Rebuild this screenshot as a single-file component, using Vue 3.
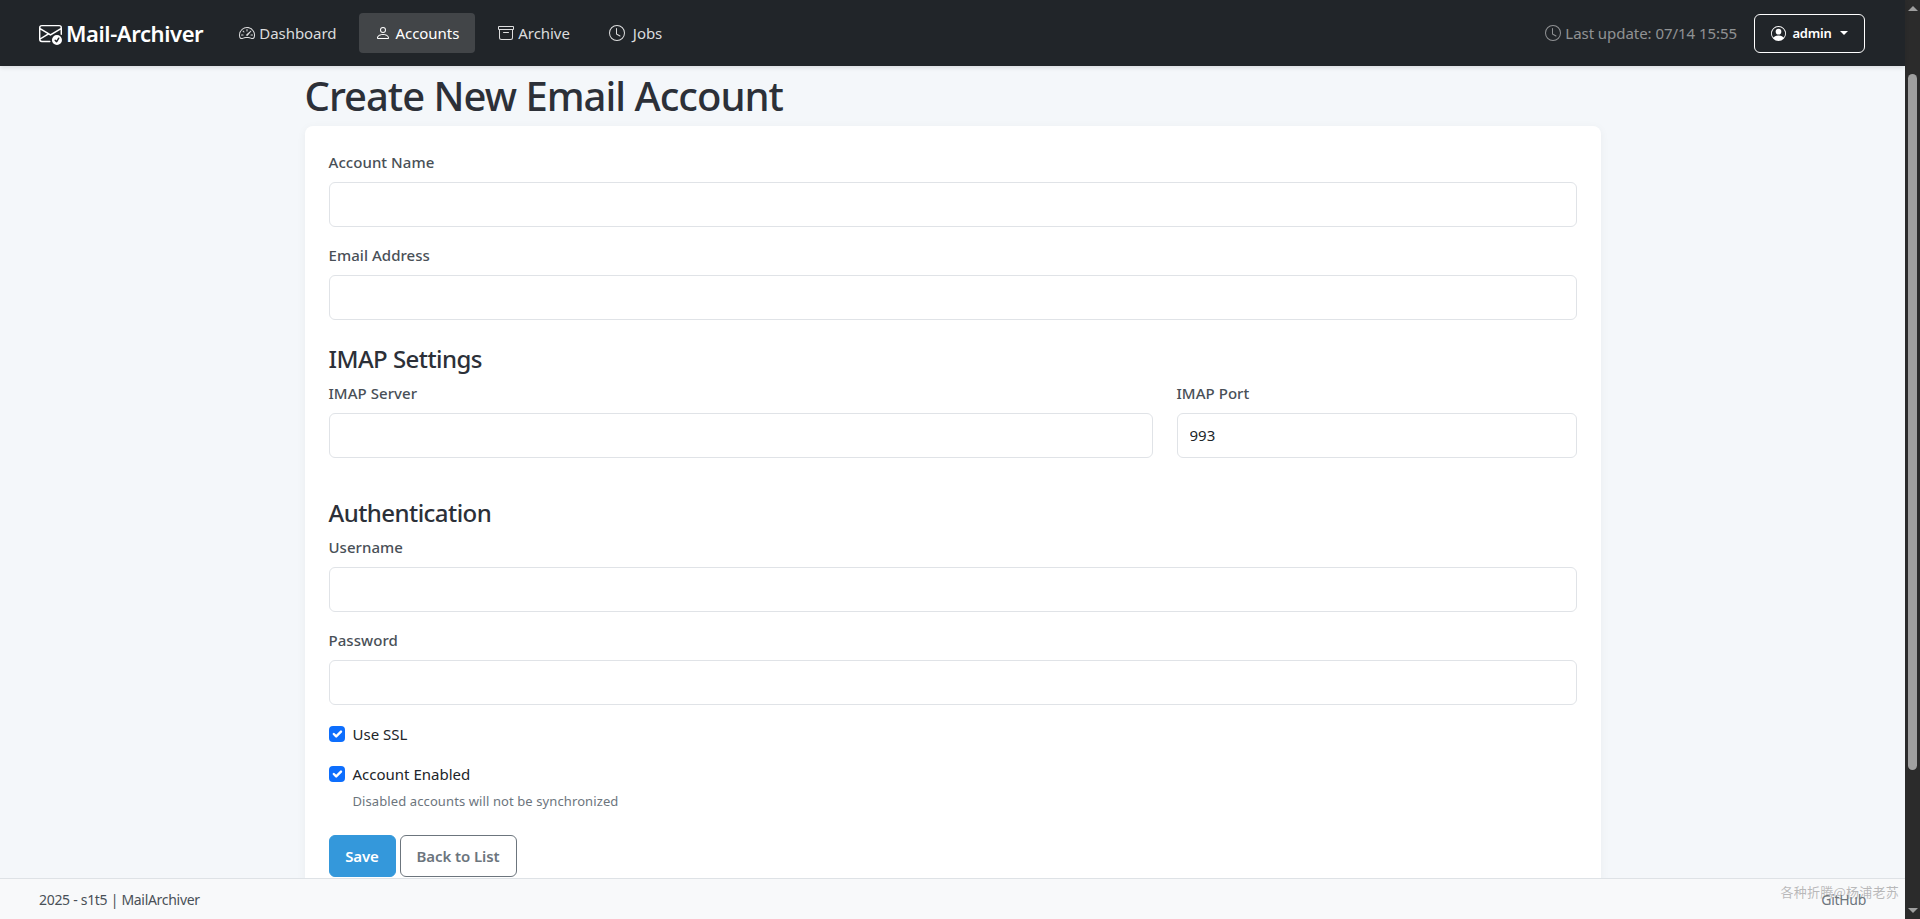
<script setup>
import { reactive } from 'vue'

const links = [
  { label: 'Dashboard', icon: 'speed', active: false },
  { label: 'Accounts', icon: 'person', active: true },
  { label: 'Archive', icon: 'archive', active: false },
  { label: 'Jobs', icon: 'clock', active: false },
]
const form = reactive({
  name: '', email: '', server: '', port: '993', username: '', password: '', ssl: true, enabled: true,
})
</script>

<template>
  <div class="window">
    <div class="page">
      <nav class="navbar">
        <a class="brand" href="#">
          <svg class="brand-icon" viewBox="0 0 16 16" fill="currentColor">
            <path d="M2 2a2 2 0 0 0-2 2v8.01A2 2 0 0 0 2 14h5.5a.5.5 0 0 0 0-1H2a1 1 0 0 1-.966-.741l5.64-3.471L8 9.583l7-4.2V8.5a.5.5 0 0 0 1 0V4a2 2 0 0 0-2-2H2Zm3.708 6.208L1 11.105V5.383l4.708 2.825ZM1 4.217V4a1 1 0 0 1 1-1h12a1 1 0 0 1 1 1v.217l-7 4.2-7-4.2Z"/>
            <path d="M16 12.5a3.5 3.5 0 1 1-7 0 3.5 3.5 0 0 1 7 0Zm-1.993-1.679a.5.5 0 0 0-.686.172l-1.17 1.95-.547-.547a.5.5 0 0 0-.708.708l.774.773a.75.75 0 0 0 1.174-.144l1.335-2.226a.5.5 0 0 0-.172-.686Z"/>
          </svg>
          <span>Mail-Archiver</span>
        </a>
        <ul class="nav-links">
          <li v-for="l in links" :key="l.label">
            <a href="#" class="nav-link" :class="{ active: l.active, jobs: l.icon === 'clock' }">
              <svg class="icon" viewBox="0 0 16 16" fill="currentColor">
                <template v-if="l.icon === 'speed'">
                  <path d="M8 4a.5.5 0 0 1 .5.5V6a.5.5 0 0 1-1 0V4.5A.5.5 0 0 1 8 4zM3.732 5.732a.5.5 0 0 1 .707 0l.915.914a.5.5 0 1 1-.708.708l-.914-.915a.5.5 0 0 1 0-.707zM2 10a.5.5 0 0 1 .5-.5h1.586a.5.5 0 0 1 0 1H2.5A.5.5 0 0 1 2 10zm9.5 0a.5.5 0 0 1 .5-.5h1.5a.5.5 0 0 1 0 1H12a.5.5 0 0 1-.5-.5zm.754-4.246a.389.389 0 0 0-.527-.02L7.547 9.31a.91.91 0 1 0 1.302 1.258l3.434-4.297a.389.389 0 0 0-.029-.518z"/>
                  <path fill-rule="evenodd" d="M0 10a8 8 0 1 1 15.547 2.661c-.442 1.253-1.845 1.602-2.932 1.25C11.309 13.488 9.475 13 8 13c-1.474 0-3.31.488-4.615.911-1.087.352-2.49.003-2.932-1.25A7.988 7.988 0 0 1 0 10zm8-7a7 7 0 0 0-6.603 9.329c.203.575.923.876 1.68.63C4.397 12.533 6.358 12 8 12s3.604.532 4.923.96c.757.245 1.477-.056 1.68-.631A7 7 0 0 0 8 3z"/>
                </template>
                <path v-else-if="l.icon === 'person'" d="M8 8a3 3 0 1 0 0-6 3 3 0 0 0 0 6Zm2-3a2 2 0 1 1-4 0 2 2 0 0 1 4 0Zm4 8c0 1-1 1-1 1H3s-1 0-1-1 1-4 6-4 6 3 6 4Zm-1-.004c-.001-.246-.154-.986-.832-1.664C11.516 10.68 10.289 10 8 10c-2.29 0-3.516.68-4.168 1.332-.678.678-.83 1.418-.832 1.664h10Z"/>
                <path v-else-if="l.icon === 'archive'" d="M0 2a1 1 0 0 1 1-1h14a1 1 0 0 1 1 1v2a1 1 0 0 1-1 1v7.5a2.5 2.5 0 0 1-2.5 2.5h-9A2.5 2.5 0 0 1 1 12.5V5a1 1 0 0 1-1-1V2zm2 3v7.5A1.5 1.5 0 0 0 3.5 14h9a1.5 1.5 0 0 0 1.5-1.5V5H2zm13-3H1v2h14V2zM5 7.5a.5.5 0 0 1 .5-.5h5a.5.5 0 0 1 0 1h-5a.5.5 0 0 1-.5-.5z"/>
                <template v-else>
                  <path d="M8 3.5a.5.5 0 0 0-1 0V9a.5.5 0 0 0 .252.434l3.5 2a.5.5 0 0 0 .496-.868L8 8.71V3.5z"/>
                  <path d="M8 16A8 8 0 1 0 8 0a8 8 0 0 0 0 16zm7-8A7 7 0 1 1 1 8a7 7 0 0 1 14 0z"/>
                </template>
              </svg>
              <span>{{ l.label }}</span>
            </a>
          </li>
        </ul>
        <div class="nav-right">
          <span class="last-update">
            <svg class="icon" viewBox="0 0 16 16" fill="currentColor">
              <path d="M8 3.5a.5.5 0 0 0-1 0V9a.5.5 0 0 0 .252.434l3.5 2a.5.5 0 0 0 .496-.868L8 8.71V3.5z"/>
              <path d="M8 16A8 8 0 1 0 8 0a8 8 0 0 0 0 16zm7-8A7 7 0 1 1 1 8a7 7 0 0 1 14 0z"/>
            </svg>
            <span>Last update: 07/14 15:55</span>
          </span>
          <button class="user-btn" type="button">
            <svg class="icon" viewBox="0 0 16 16" fill="currentColor">
              <path d="M11 6a3 3 0 1 1-6 0 3 3 0 0 1 6 0z"/>
              <path fill-rule="evenodd" d="M0 8a8 8 0 1 1 16 0A8 8 0 0 1 0 8zm8-7a7 7 0 0 0-5.468 11.37C3.242 11.226 4.805 10 8 10s4.757 1.225 5.468 2.37A7 7 0 0 0 8 1z"/>
            </svg>
            <span>admin</span>
            <i class="caret"></i>
          </button>
        </div>
      </nav>

      <main class="main">
        <div class="container">
          <h1>Create New Email Account</h1>
          <form class="card" @submit.prevent>
            <div class="field">
              <label for="f-name">Account Name</label>
              <input id="f-name" v-model="form.name" type="text" />
            </div>
            <div class="field">
              <label for="f-email">Email Address</label>
              <input id="f-email" v-model="form.email" type="text" />
            </div>
            <h4>IMAP Settings</h4>
            <div class="row">
              <div class="field">
                <label for="f-server">IMAP Server</label>
                <input id="f-server" v-model="form.server" type="text" />
              </div>
              <div class="field">
                <label for="f-port">IMAP Port</label>
                <input id="f-port" v-model="form.port" type="text" />
              </div>
            </div>
            <h4 class="auth">Authentication</h4>
            <div class="field">
              <label for="f-user">Username</label>
              <input id="f-user" v-model="form.username" type="text" />
            </div>
            <div class="field password">
              <label for="f-pass">Password</label>
              <input id="f-pass" v-model="form.password" type="password" />
            </div>
            <label class="check">
              <input v-model="form.ssl" type="checkbox" />
              <span>Use SSL</span>
            </label>
            <label class="check enabled">
              <input v-model="form.enabled" type="checkbox" />
              <span>Account Enabled</span>
            </label>
            <small class="hint">Disabled accounts will not be synchronized</small>
            <div class="actions">
              <button class="btn save" type="submit">Save</button>
              <a class="btn back" href="#">Back to List</a>
            </div>
          </form>
        </div>
      </main>

      <footer class="footer">
        <span>2025 - s1t5 | MailArchiver</span>
        <a href="#">GitHub</a>
        <span class="watermark">各种折腾@杨浦老苏</span>
      </footer>
    </div>

    <div class="scrollbar">
      <i class="arrow up"></i>
      <div class="track"><div class="thumb"></div></div>
      <i class="arrow down"></i>
    </div>
  </div>
</template>

<style>
html, body { margin: 0; overflow: hidden; }
</style>

<style scoped>
* { box-sizing: border-box; }
.window {
  display: flex;
  height: 100vh;
  font-family: "Noto Sans", "Open Sans", "Noto Sans CJK SC", sans-serif;
  font-size: 16px;
  color: #212529;
}
.page { flex: 1; min-width: 0; display: flex; flex-direction: column; background: #f4f7fa; position: relative; }

.navbar {
  flex: none;
  height: 66px;
  display: flex;
  align-items: center;
  padding: 0 40px 0 39px;
  background: #212529;
  box-shadow: 0 2px 4px rgba(0, 0, 0, .1);
  position: relative;
  z-index: 2;
}
.brand {
  display: flex;
  align-items: center;
  gap: 4px;
  color: #fff;
  text-decoration: none;
  font-size: 22px;
  font-weight: 600;
  letter-spacing: -.4px;
}
.brand-icon { width: 23px; height: 23px; }
.nav-links { display: flex; gap: 7px; list-style: none; margin: 0 0 0 20px; padding: 0; }
.nav-link {
  display: flex;
  align-items: center;
  gap: 4px;
  height: 40px;
  padding: 0 16px;
  border-radius: 4px;
  color: rgba(255, 255, 255, .85);
  text-decoration: none;
  font-size: 15px;
  letter-spacing: -.05px;
}
.nav-link.active { background: rgba(255, 255, 255, .15); color: #fff; }
.nav-link.jobs { gap: 8px; }
.icon { width: 16px; height: 16px; flex: none; }
.nav-right { margin-left: auto; display: flex; align-items: center; gap: 17px; }
.last-update {
  display: flex;
  align-items: center;
  gap: 4px;
  color: rgba(255, 255, 255, .5);
  font-size: 15px;
  letter-spacing: -.05px;
}
.user-btn {
  display: flex;
  align-items: center;
  justify-content: center;
  width: 111px;
  height: 39px;
  gap: 6px;
  padding: 0;
  background: transparent;
  border: 1px solid #fff;
  border-radius: 6px;
  color: #fff;
  font: 600 13px "Noto Sans", sans-serif;
  letter-spacing: -.2px;
}
.user-btn .icon { width: 15px; height: 15px; }
.caret { border-top: 4px solid #fff; border-left: 4px solid transparent; border-right: 4px solid transparent; margin-left: 2px; }

.main { flex: 1; min-height: 0; overflow: hidden; }
.container { width: 1296px; margin: 0 auto; }
h1 {
  margin: 6px 0 6px;
  font-size: 40px;
  line-height: 48px;
  font-weight: 500;
  color: #2c3038;
  letter-spacing: -1px;
}
.card {
  display: flex;
  flex-direction: column;
  padding: 24px;
  background: #fff;
  border-radius: 8px;
  box-shadow: 0 2px 10px rgba(0, 0, 0, .05);
}
.field { display: flex; flex-direction: column; margin-bottom: 16px; min-width: 0; }
.field.password { margin-bottom: 17px; }
label { font-size: 15px; }
.field label {
  height: 24px;
  line-height: 24px;
  margin-bottom: 8px;
  font-weight: 500;
  color: #495057;
  letter-spacing: .05px;
}
.field input {
  height: 45px;
  width: 100%;
  padding: 0 12px 2px;
  border: 1px solid #e0e3e7;
  border-radius: 6px;
  background: #fff;
  font: 15px "Noto Sans", sans-serif;
  color: #212529;
  outline: none;
}
h4 {
  margin: 8px 0 8px;
  font-size: 24px;
  line-height: 29px;
  font-weight: 500;
  color: #2c3038;
  letter-spacing: -.55px;
}
h4.auth { margin-top: 40px; }
.row { display: grid; grid-template-columns: 824px 400px; gap: 24px; }
.row .field { margin-bottom: 0; }
.check {
  display: flex;
  align-items: center;
  gap: 8px;
  height: 24px;
  color: #212529;
  letter-spacing: 0;
}
.check input {
  appearance: none;
  width: 16px;
  height: 16px;
  margin: 0;
  border-radius: 4px;
  background: #0d6efd url("data:image/svg+xml,%3csvg xmlns='http://www.w3.org/2000/svg' viewBox='0 0 20 20'%3e%3cpath fill='none' stroke='%23fff' stroke-linecap='round' stroke-linejoin='round' stroke-width='3' d='m6 10 3 3 6-6'/%3e%3c/svg%3e") center / 100% no-repeat;
}
.check.enabled { margin-top: 16px; }
.hint { margin: 7px 0 0 24px; font-size: 13px; line-height: 16px; color: #6c757d; letter-spacing: .1px; }
.actions { display: flex; gap: 4px; margin-top: 26px; }
.btn {
  display: flex;
  align-items: center;
  justify-content: center;
  height: 42px;
  border-radius: 6px;
  font: 600 15px "Noto Sans", sans-serif;
  letter-spacing: -.1px;
  text-decoration: none;
}
.save { width: 67px; border: 1px solid #3498db; background: #3498db; color: #fff; }
.back { width: 117px; border: 1px solid #6c757d; color: #6c757d; background: #fff; }

.footer {
  flex: none;
  height: 41px;
  display: flex;
  align-items: center;
  justify-content: space-between;
  padding: 0 39px;
  border-top: 1px solid #dee2e6;
  background: #f8f9fa;
  font-size: 14px;
  color: #495057;
  position: relative;
  z-index: 2;
}
.footer > span:first-child { letter-spacing: -.3px; }
.footer a { color: #6c757d; text-decoration: none; letter-spacing: -.3px; }
.watermark {
  position: absolute;
  right: 6px;
  top: 3px;
  font-family: "Noto Sans CJK SC", sans-serif;
  font-size: 13px;
  line-height: 20px;
  letter-spacing: .25px;
  color: rgba(120, 120, 120, .5);
}

.scrollbar { flex: none; width: 15px; background: #2b2b2b; display: flex; flex-direction: column; align-items: center; }
.track { flex: 1; width: 100%; padding: 0 3px; }
.thumb { width: 9px; height: 696px; margin-top: 57px; background: #9f9f9f; border-radius: 5px; }
.arrow { flex: none; width: 0; height: 0; border-left: 5px solid transparent; border-right: 5px solid transparent; margin: 6px 0; }
.arrow.up { border-bottom: 5px solid #9f9f9f; }
.arrow.down { border-top: 5px solid #9f9f9f; }
</style>
